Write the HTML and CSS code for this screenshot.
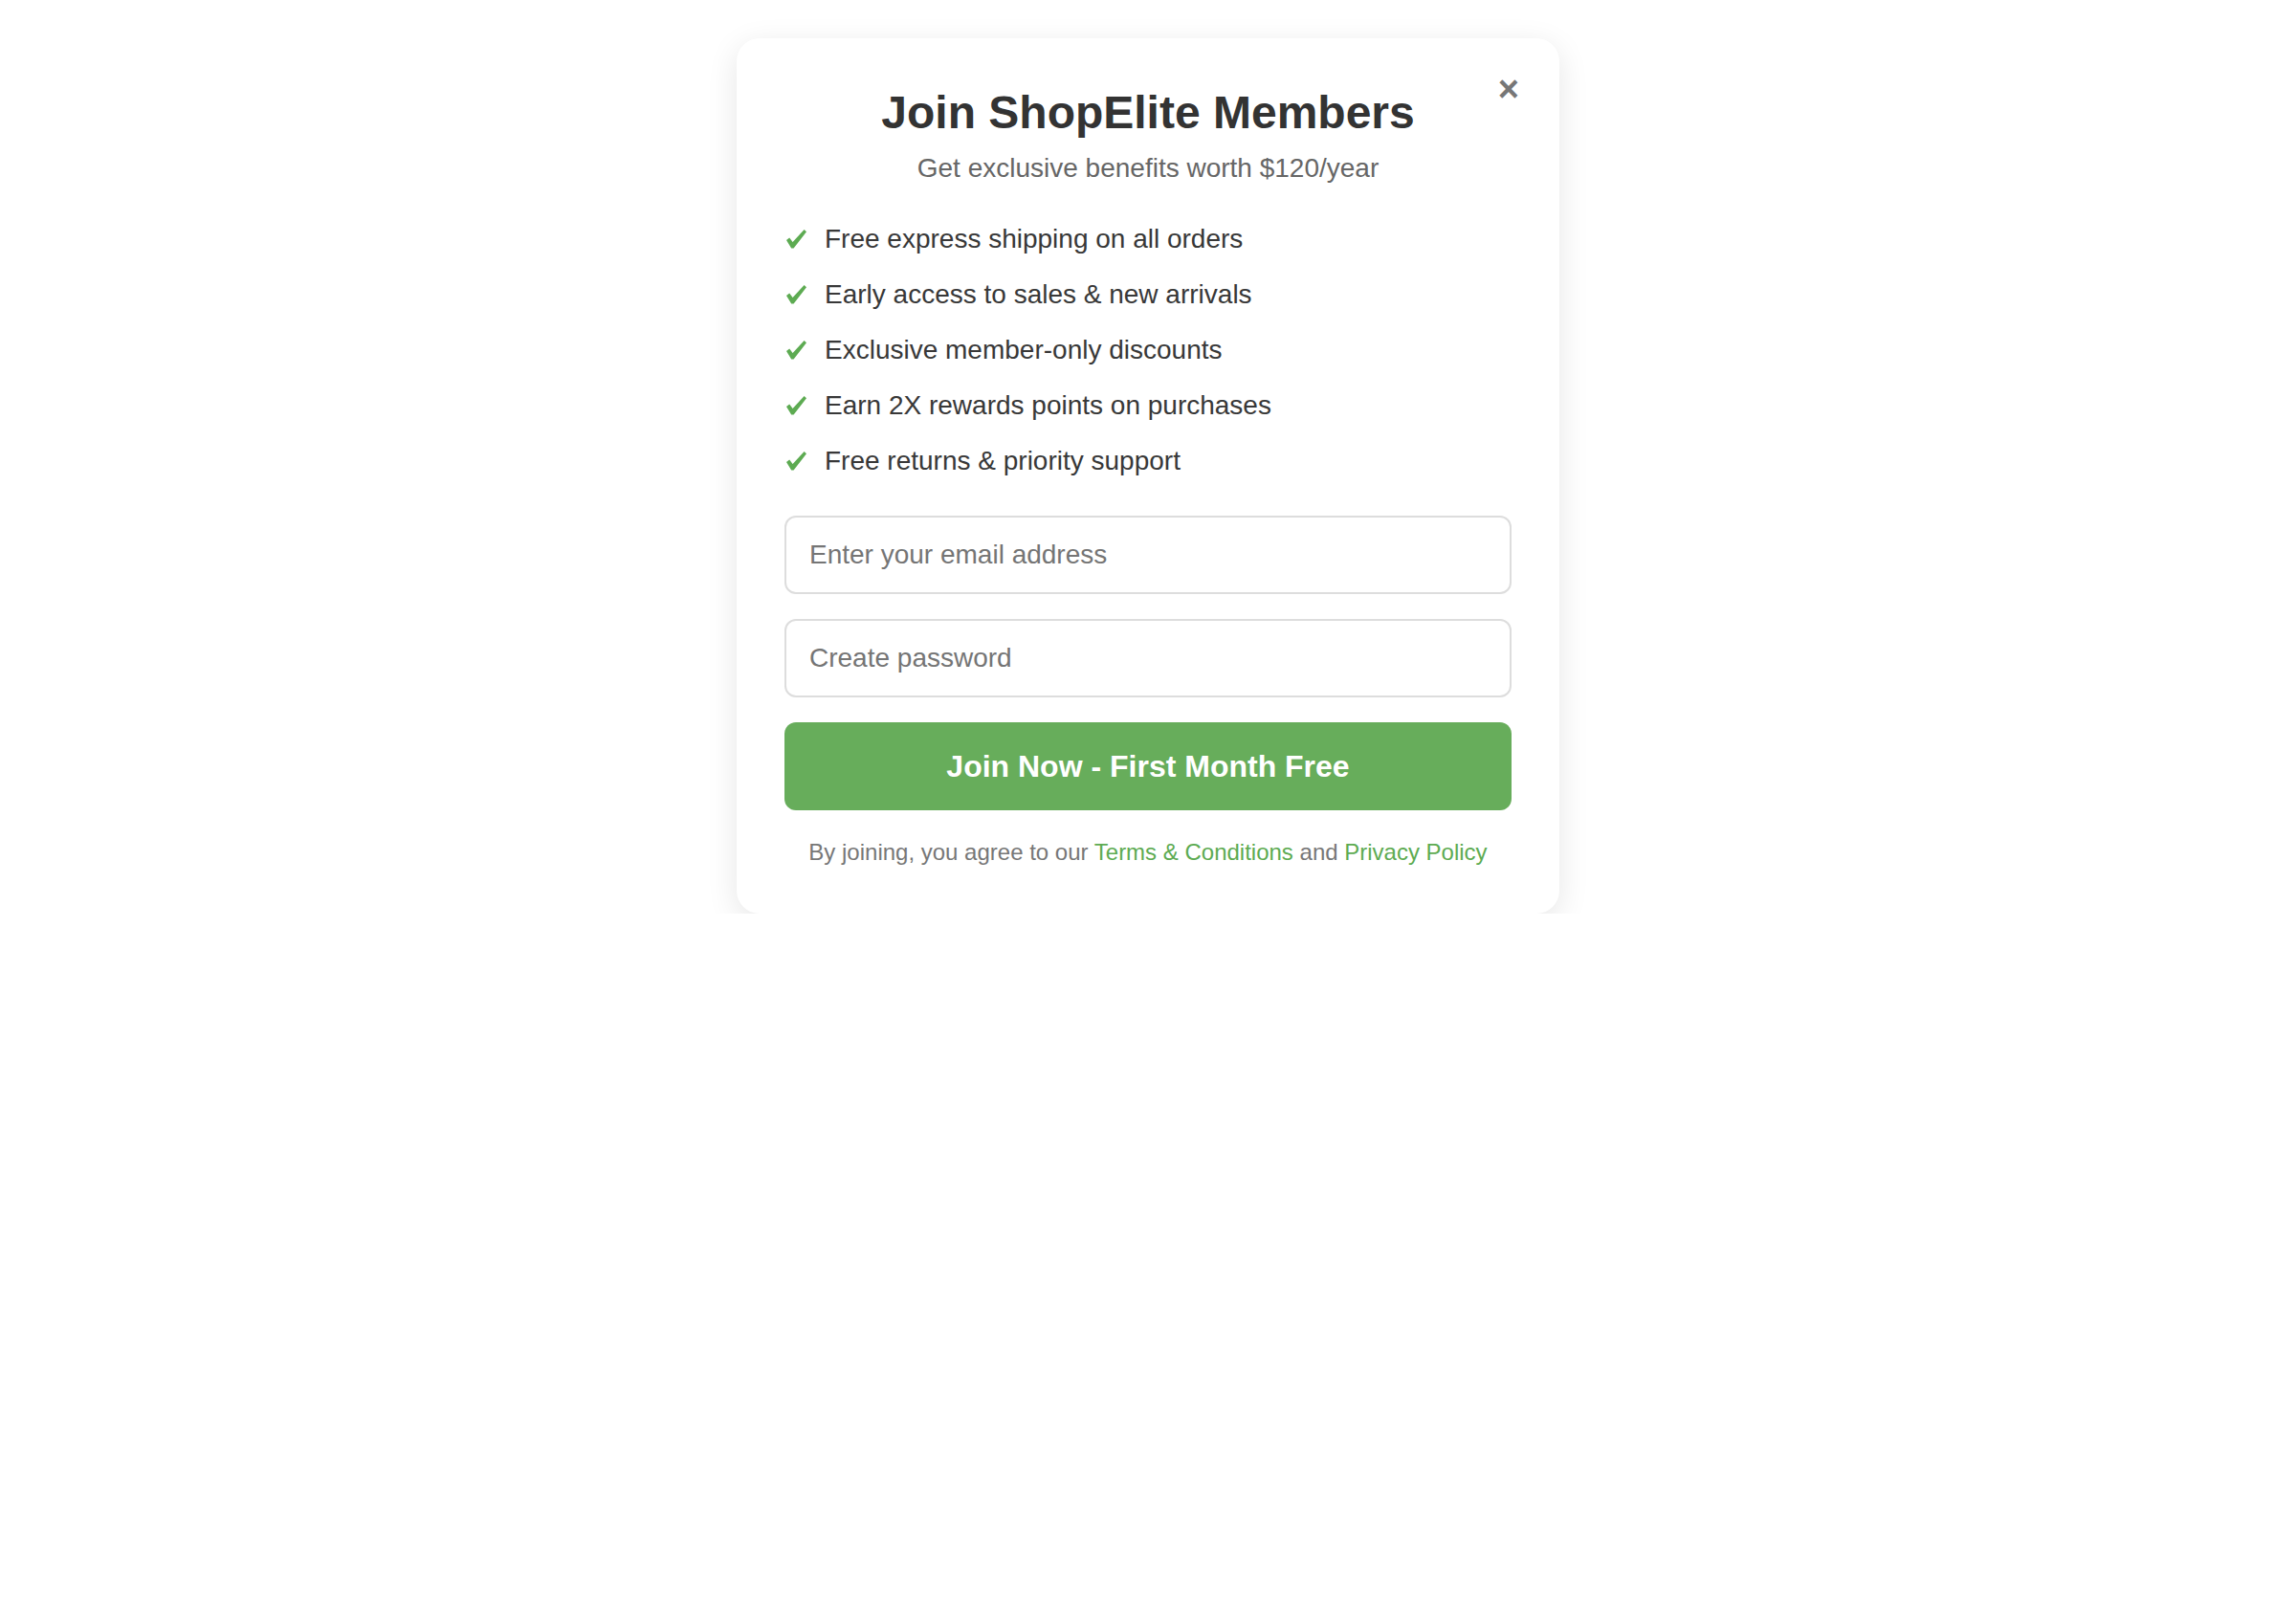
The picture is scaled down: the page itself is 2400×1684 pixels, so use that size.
FILE: index.html
```html
<!DOCTYPE html>
<html lang="en">
<head>
<meta charset="utf-8">
<title>Join ShopElite Members</title>
<link rel="stylesheet" href="styles.css">
</head>
<body>
<div class="page">
  <div class="modal">
    <button class="close" type="button" aria-label="Close">×</button>
    <h1 class="title">Join ShopElite Members</h1>
    <p class="subtitle">Get exclusive benefits worth $120/year</p>
    <ul class="benefits">
      <li><svg class="check" viewBox="0 0 21 20" width="21" height="20"><path d="M0 11 L3.2 8.6 L6.6 13 L18.6 0 L21 2.2 L7.6 19.6 L5.2 19.6 Z"/></svg><span>Free express shipping on all orders</span></li>
      <li><svg class="check" viewBox="0 0 21 20" width="21" height="20"><path d="M0 11 L3.2 8.6 L6.6 13 L18.6 0 L21 2.2 L7.6 19.6 L5.2 19.6 Z"/></svg><span>Early access to sales &amp; new arrivals</span></li>
      <li><svg class="check" viewBox="0 0 21 20" width="21" height="20"><path d="M0 11 L3.2 8.6 L6.6 13 L18.6 0 L21 2.2 L7.6 19.6 L5.2 19.6 Z"/></svg><span>Exclusive member-only discounts</span></li>
      <li><svg class="check" viewBox="0 0 21 20" width="21" height="20"><path d="M0 11 L3.2 8.6 L6.6 13 L18.6 0 L21 2.2 L7.6 19.6 L5.2 19.6 Z"/></svg><span>Earn 2X rewards points on purchases</span></li>
      <li><svg class="check" viewBox="0 0 21 20" width="21" height="20"><path d="M0 11 L3.2 8.6 L6.6 13 L18.6 0 L21 2.2 L7.6 19.6 L5.2 19.6 Z"/></svg><span>Free returns &amp; priority support</span></li>
    </ul>
    <form class="form">
      <input class="field" type="email" placeholder="Enter your email address">
      <input class="field" type="password" placeholder="Create password">
      <button class="submit" type="button">Join Now - First Month Free</button>
    </form>
    <p class="legal">By joining, you agree to our <a href="#">Terms &amp; Conditions</a> and <a href="#">Privacy Policy</a></p>
  </div>
</div>
</body>
</html>
```

FILE: styles.css
```css
* { box-sizing: border-box; }

html, body {
  margin: 0;
  padding: 0;
  background: #ffffff;
  font-family: "Liberation Sans", Arial, Helvetica, sans-serif;
}

.page {
  display: flex;
  justify-content: center;
  padding-top: 40px;
}

.modal {
  position: relative;
  width: 860px;
  background: #ffffff;
  border-radius: 24px;
  box-shadow: 0 8px 32px rgba(0, 0, 0, 0.1);
  padding: 50px 50px 50px;
}

.close {
  position: absolute;
  top: 33px;
  right: 42px;
  border: none;
  background: none;
  padding: 0;
  font-family: "Liberation Sans", Arial, sans-serif;
  font-size: 38px;
  font-weight: bold;
  line-height: 40px;
  color: #777777;
  cursor: pointer;
}

.title {
  margin: 0;
  text-align: center;
  font-size: 48px;
  line-height: 55px;
  font-weight: bold;
  color: #333333;
}

.subtitle {
  margin: 15px 0 0;
  text-align: center;
  font-size: 28px;
  line-height: 32px;
  color: #666666;
}

.benefits {
  list-style: none;
  margin: 29px 0 0;
  padding: 0;
  display: flex;
  flex-direction: column;
}

.benefits li {
  display: flex;
  align-items: center;
  gap: 19px;
  padding: 13px 0;
  font-size: 28px;
  line-height: 32px;
  color: #383838;
}

.check {
  flex: none;
  margin-left: 2px;
  fill: #5dab52;
}

.form {
  margin-top: 28px;
  display: flex;
  flex-direction: column;
  gap: 26px;
}

.field {
  width: 100%;
  height: 82px;
  padding: 0 24px;
  border: 2px solid #dddddd;
  border-radius: 12px;
  font-family: "Liberation Sans", Arial, sans-serif;
  font-size: 28px;
  color: #333333;
  background: #ffffff;
  outline: none;
}

.field::placeholder {
  color: #757575;
}

.submit {
  width: 100%;
  height: 92px;
  border: none;
  border-radius: 12px;
  background: #67ad5b;
  color: #ffffff;
  font-family: "Liberation Sans", Arial, sans-serif;
  font-size: 32px;
  font-weight: bold;
  cursor: pointer;
}

.legal {
  margin: 30px 0 0;
  text-align: center;
  font-size: 24px;
  line-height: 28px;
  color: #777777;
}

.legal a {
  color: #5dab52;
  text-decoration: none;
}
```
